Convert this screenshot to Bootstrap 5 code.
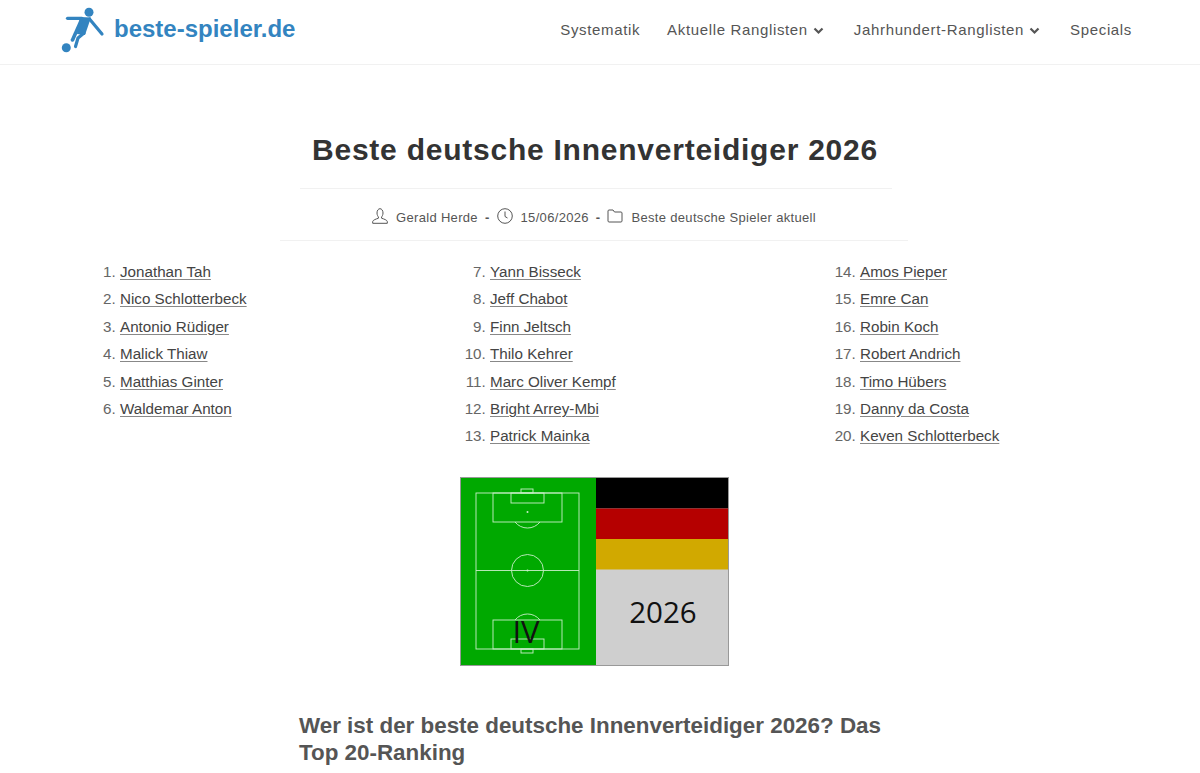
<!DOCTYPE html>
<html lang="de">
<head>
<meta charset="utf-8">
<title>Beste deutsche Innenverteidiger 2026</title>
<link href="https://cdn.jsdelivr.net/npm/bootstrap@5.3.0/dist/css/bootstrap.min.css" rel="stylesheet">
<style>
html,body{height:773px;overflow:hidden}
body{font-family:"Liberation Sans",Arial,sans-serif;color:#555;background:#fff}
.site-head{height:65px;border-bottom:1px solid #f1f1f1;padding:0 68px 0 60px}
.brand-text{font-size:24px;font-weight:700;color:#3384c0;margin-left:9px;text-decoration:none;line-height:1;margin-bottom:3px}
.brand-link{text-decoration:none;margin-top:-4px}
.menu-row{gap:27px;margin:0 0 3px;padding:0;list-style:none}
.menu-row a{color:#555;font-size:15px;letter-spacing:.65px;text-decoration:none;display:flex;align-items:center;gap:5px}
.menu-row svg{margin-right:3px}
.page-wrap{width:1190px}
.post-title{font-size:30px;line-height:40px;font-weight:700;color:#333;letter-spacing:.76px;text-align:center;margin:65px 0 18px}
.rule-a{width:592px;height:1px;background:#f1f1f1;margin:0 0 0 300px}
.meta-row{height:51px;font-size:13px;color:#555;letter-spacing:.32px;gap:7px;padding:7px 2px 0 0}
.meta-row svg{margin-top:-4px}
.meta-sep{font-weight:700}
.meta-item{gap:8px}
.rule-b{width:628px;height:1px;background:#f1f1f1;margin:0 0 0 280px}
.rank-grid{display:grid;grid-template-columns:370px 370px 370px;margin:17px 0 0 120px;width:1080px}
.rank-list{margin:0;padding:0;list-style-position:outside;font-size:15.2px;line-height:27.4px;color:#666}
.rank-list a{color:#444;text-decoration:underline;text-decoration-color:#888;text-underline-offset:2px}
.flag-pic{display:block;margin:27px 0 0 460px;width:269px;height:189px}
.sub-title{font-size:22.4px;line-height:27px;font-weight:700;color:#555;margin:46px 0 0 299px;width:600px}
</style>
</head>
<body>
<header class="site-head d-flex align-items-center justify-content-between">
  <a class="brand-link d-flex align-items-center" href="#">
    <svg width="45" height="46" viewBox="0 0 45 46" aria-hidden="true">
      <circle cx="29" cy="5.300" r="4.500" fill="#3384c0"/>
      <circle cx="6.300" cy="40.700" r="4.500" fill="#3384c0"/>
      <path d="M7.500 11.300 H22" fill="none" stroke="#3384c0" stroke-width="3.200" stroke-linecap="round"/>
      <path d="M29.500 12 L42 27" fill="none" stroke="#3384c0" stroke-width="3.200" stroke-linecap="round"/>
      <path d="M20 10 L31 10.500 L25 28 L17 27 Z" fill="#3384c0"/>
      <path d="M21 14 L12.500 33" fill="none" stroke="#3384c0" stroke-width="3.600" stroke-linecap="round"/>
      <path d="M24 26 L18 31 L15.500 39.500" fill="none" stroke="#3384c0" stroke-width="3.200" stroke-linecap="round" stroke-linejoin="round"/>
    </svg>
    <span class="brand-text">beste-spieler.de</span>
  </a>
  <ul class="menu-row d-flex align-items-center">
    <li><a href="#">Systematik</a></li>
    <li><a href="#">Aktuelle Ranglisten
      <svg width="11" height="8" viewBox="0 0 11 8" aria-hidden="true"><path d="M1.500 1.500 L5.500 5.500 L9.500 1.500" fill="none" stroke="#555" stroke-width="2.200"/></svg></a></li>
    <li><a href="#">Jahrhundert-Ranglisten
      <svg width="11" height="8" viewBox="0 0 11 8" aria-hidden="true"><path d="M1.500 1.500 L5.500 5.500 L9.500 1.500" fill="none" stroke="#555" stroke-width="2.200"/></svg></a></li>
    <li><a href="#">Specials</a></li>
  </ul>
</header>
<main class="page-wrap">
  <h1 class="post-title">Beste deutsche Innenverteidiger 2026</h1>
  <div class="rule-a"></div>
  <div class="meta-row d-flex align-items-center justify-content-center">
    <span class="meta-item d-flex align-items-center">
      <svg width="16" height="16" viewBox="0 0 16 16" fill="none" stroke="#555" stroke-width="1" aria-hidden="true"><path d="M5 5 C5 2.500 6.300 .7 8 .7 C9.700 .7 11 2.500 11 5 C11 7 10 8.500 9.500 9 L9.700 10.300 C12 11 15 12 15.300 13.500 V15.300 H.7 V13.500 C1 12 4 11 6.300 10.300 L6.500 9 C6 8.500 5 7 5 5 Z"/></svg>
      Gerald Herde</span>
    <span class="meta-sep">-</span>
    <span class="meta-item d-flex align-items-center">
      <svg width="16" height="16" viewBox="0 0 16 16" fill="none" stroke="#555" stroke-width="1" aria-hidden="true"><circle cx="8" cy="8" r="7.300"/><path d="M8 3.500 V8.500 L10.500 10"/></svg>
      15/06/2026</span>
    <span class="meta-sep">-</span>
    <span class="meta-item d-flex align-items-center">
      <svg width="16" height="14" viewBox="0 0 16 14" fill="none" stroke="#555" stroke-width="1" aria-hidden="true"><path d="M1 12 V2 C1 1.400 1.400 1 2 1 H6 L7.500 3 H14 C14.600 3 15 3.400 15 4 V12 C15 12.600 14.600 13 14 13 H2 C1.400 13 1 12.600 1 12 Z"/></svg>
      Beste deutsche Spieler aktuell</span>
  </div>
  <div class="rule-b"></div>
  <div class="rank-grid">
    <ol class="rank-list" start="1">
      <li><a href="#">Jonathan Tah</a></li>
      <li><a href="#">Nico Schlotterbeck</a></li>
      <li><a href="#">Antonio Rüdiger</a></li>
      <li><a href="#">Malick Thiaw</a></li>
      <li><a href="#">Matthias Ginter</a></li>
      <li><a href="#">Waldemar Anton</a></li>
    </ol>
    <ol class="rank-list" start="7">
      <li><a href="#">Yann Bisseck</a></li>
      <li><a href="#">Jeff Chabot</a></li>
      <li><a href="#">Finn Jeltsch</a></li>
      <li><a href="#">Thilo Kehrer</a></li>
      <li><a href="#">Marc Oliver Kempf</a></li>
      <li><a href="#">Bright Arrey-Mbi</a></li>
      <li><a href="#">Patrick Mainka</a></li>
    </ol>
    <ol class="rank-list" start="14">
      <li><a href="#">Amos Pieper</a></li>
      <li><a href="#">Emre Can</a></li>
      <li><a href="#">Robin Koch</a></li>
      <li><a href="#">Robert Andrich</a></li>
      <li><a href="#">Timo Hübers</a></li>
      <li><a href="#">Danny da Costa</a></li>
      <li><a href="#">Keven Schlotterbeck</a></li>
    </ol>
  </div>
  <svg class="flag-pic" viewBox="0 0 269 189" role="img" aria-label="Spielfeld und deutsche Flagge 2026">
    <rect x=".5" y=".5" width="268" height="188" fill="#cfcfcf" stroke="#999"/>
    <rect x="1" y="1" width="135" height="187" fill="#00a900"/>
    <rect x="136" y="1" width="132" height="30.500" fill="#000"/>
    <rect x="136" y="31.500" width="132" height="30.500" fill="#b50000"/>
    <rect x="136" y="62" width="132" height="30.500" fill="#d1a900"/>
    <g fill="none" stroke="#c8eec8" stroke-width=".9">
      <rect x="16" y="16" width="103" height="156"/>
      <path d="M16 93.500 H119"/>
      <circle cx="67.500" cy="93.500" r="16"/>
      <rect x="33" y="16" width="69" height="29"/>
      <rect x="51" y="16" width="33" height="10"/>
      <rect x="61" y="12" width="12" height="4"/>
      <path d="M55 45 A16 16 0 0 0 80 45"/>
      <rect x="33" y="143" width="69" height="29"/>
      <rect x="51" y="162" width="33" height="10"/>
      <rect x="61" y="172" width="12" height="4"/>
      <path d="M55 143 A16 16 0 0 1 80 143"/>
    </g>
    <circle cx="67.500" cy="35" r="1" fill="#c8eec8"/>
    <circle cx="67.500" cy="93.500" r="1" fill="#c8eec8"/>
    <text x="66" y="166" text-anchor="middle" font-family="Open Sans, sans-serif" font-size="31" fill="#111">IV</text>
    <text x="203" y="146" text-anchor="middle" font-family="Open Sans, sans-serif" font-size="29.500" fill="#111">2026</text>
  </svg>
  <h2 class="sub-title">Wer ist der beste deutsche Innenverteidiger 2026? Das Top 20-Ranking</h2>
</main>
</body>
</html>
